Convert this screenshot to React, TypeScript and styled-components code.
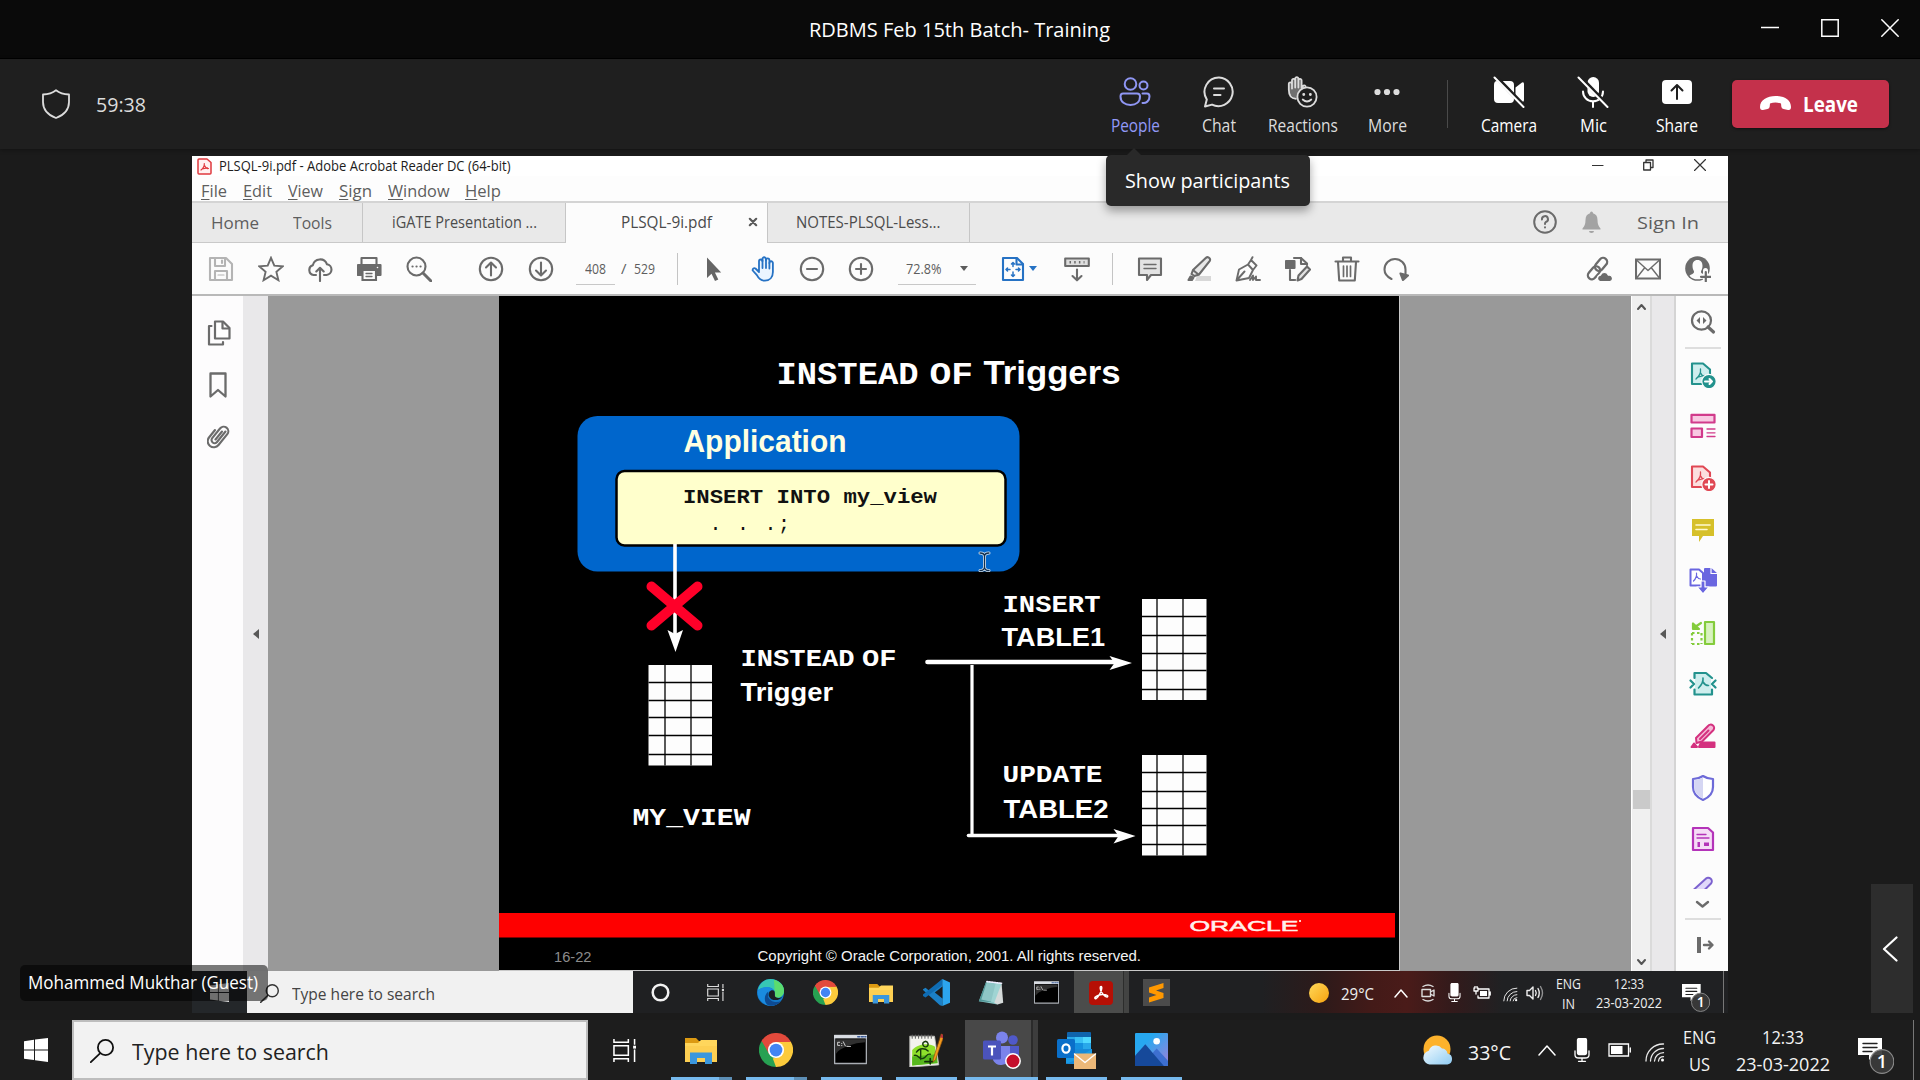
import React, { useLayoutEffect, useRef } from 'react';
import styled, { createGlobalStyle, css } from 'styled-components';

const UI = '"Open Sans", "Noto Sans", sans-serif';

const Global = createGlobalStyle`
  * { box-sizing: border-box; }
  html, body { margin: 0; background: #1b1b1b; overflow: hidden; }
  svg { display: block; flex: none; }
`;

/* ---------- text ---------- */

const TextBox = styled.span<{ $w: number; $size: number; $color?: string; $weight?: number; $lh?: number; $ml?: number }>`
  display: block;
  flex: none;
  width: ${p => p.$w}px;
  margin-left: ${p => p.$ml ?? 0}px;
  font-family: ${UI};
  font-size: ${p => p.$size}px;
  font-weight: ${p => p.$weight ?? 400};
  line-height: ${p => (p.$lh ? `${p.$lh}px` : 'normal')};
  color: ${p => p.$color ?? 'inherit'};
  white-space: nowrap;
`;

const Glyphs = styled.span`
  display: inline-block;
  transform-origin: 0 50%;
  u { text-underline-offset: 2px; text-decoration-thickness: 1px; }
`;

type TextProps = {
  w: number;
  size: number;
  color?: string;
  weight?: number;
  lh?: number;
  ml?: number;
  children: React.ReactNode;
};

/* Text that is condensed or widened to take up exactly the width it is given. */
function Text({ w, size, color, weight, lh, ml, children }: TextProps) {
  const ref = useRef<HTMLSpanElement>(null);
  useLayoutEffect(() => {
    const el = ref.current;
    if (!el) return;
    el.style.transform = 'none';
    const natural = el.getBoundingClientRect().width;
    el.style.transform = `scaleX(${w / natural})`;
  }, [w, children]);
  return (
    <TextBox $w={w} $size={size} $color={color} $weight={weight} $lh={lh} $ml={ml}>
      <Glyphs ref={ref}>{children}</Glyphs>
    </TextBox>
  );
}

/* ---------- icons ---------- */

type IconProps = { w: number; h: number; children: React.ReactNode; vb?: string; stroke?: string; sw?: number; fill?: string };

function Icon({ w, h, children, vb, stroke = 'none', sw = 2, fill = 'none' }: IconProps) {
  return (
    <svg width={w} height={h} viewBox={vb ?? `0 0 ${w} ${h}`} fill={fill} stroke={stroke} strokeWidth={sw} strokeLinecap="round" strokeLinejoin="round">
      {children}
    </svg>
  );
}

const G = '#6b6b6b';
const Tool = ({ children, stroke = G, sw = 2.1 }: { children: React.ReactNode; stroke?: string; sw?: number }) => (
  <Icon w={26} h={26} stroke={stroke} sw={sw}>{children}</Icon>
);

const SaveIcon = () => (
  <Tool stroke="#b4b4b4">
    <path d="M2 2H18L24 8V24H2Z" />
    <path d="M7 2V10H17V2M14 4.5V7M7 24V15H19V24" />
    <path d="M10 19H16" strokeWidth="1.2" />
  </Tool>
);
const StarIcon = () => <Tool sw={1.9}><path d="M13 1.8 16.3 9.6 24.8 10.3 18.4 15.9 20.4 24.2 13 19.7 5.6 24.2 7.6 15.9 1.2 10.3 9.7 9.6Z" strokeLinejoin="miter" /></Tool>;
const CloudUpIcon = () => <Tool><path d="M9 19H6.5A5 5 0 0 1 5.8 9.3 7.4 7.4 0 0 1 20 8.3 5.4 5.4 0 0 1 19.5 19H17M13 25V12M9.3 15.5 13 11.8 16.7 15.5" /></Tool>;
const PrintIcon = () => (
  <Tool>
    <path d="M4.5 8V2H19.500V8" />
    <path d="M1 9H23.500V19H1Z" fill={G} />
    <path d="M5.500 14H19V24H5.500Z" fill="#fcfcfc" strokeLinejoin="miter" />
    <path d="M9 17.5H15M9 20.5H15" strokeWidth="1.3" />
    <circle cx="20.5" cy="11.5" r=".8" fill="#fff" stroke="none" />
  </Tool>
);
const FindIcon = () => (
  <Tool>
    <circle cx="10.5" cy="10.5" r="9" />
    <path d="M17 17 25 25" strokeWidth="3" />
    <path d="M6.5 10.5h.1M10.5 10.5h.1M14.5 10.5h.1" strokeWidth="2.2" />
  </Tool>
);
const CircleIcon = ({ d }: { d: string }) => <Tool><circle cx="13" cy="13" r="11.2" /><path d={d} /></Tool>;
const PointerIcon = () => <Tool stroke="none"><path d="M6 1.5V22L10.5 17.8 14 25 17.3 23.4 13.9 16.5H20.2Z" fill="#656565" /></Tool>;
const HandIcon = () => (
  <Tool stroke="#2672c4" sw={1.8}>
    <path d="M7.5 15V5.2a1.7 1.7 0 0 1 3.4 0V3a1.7 1.7 0 0 1 3.5 0v1.2a1.7 1.7 0 0 1 3.5 0V7a1.7 1.7 0 0 1 3.5 0v9c0 5-3 8.700-8 8.700-4.500 0-6.500-2.500-8-5.500L1.200 14.500C.8 12.800 2.500 11.500 4 12.500L7.500 16" transform="translate(1.500 0)" fill="#eaf4ff" />
    <path d="M12.500 12V4M16 12V4M19.400 12.500V7" />
  </Tool>
);
const FitIcon = () => (
  <Tool stroke="#2672c4">
    <path d="M3 2H17L23 8V24H3Z" />
    <path d="M16.500 2V8.500H23" />
    <path d="M13 6.500V10.500M13 16V20.500M6 13.500H10M16 13.500H20M11.500 8 13 6.500 14.500 8M11.500 19 13 20.500 14.500 19M7.500 12 6 13.500 7.500 15M18.500 12 20 13.500 18.500 15" strokeWidth="1.5" />
  </Tool>
);
const ScrollIcon = () => (
  <Tool>
    <path d="M1.200 2.500H24.800V10H1.200Z" fill="#dedede" />
    <path d="M5.500 6.300H20.500" strokeDasharray="1.500 3.200" strokeLinecap="butt" strokeWidth="2.400" />
    <path d="M13 13.500V24M8.500 20 13 24.300 17.500 20" />
  </Tool>
);
const CommentIcon = () => (
  <Tool>
    <path d="M2 2.500H24V19H14L10 24V19H2Z" fill="#e3e3e3" />
    <path d="M7 8.500H19M7 12.500H19" strokeWidth="1.400" />
  </Tool>
);
const HighlightIcon = () => (
  <Tool>
    <path d="M11 20H25V25H9Z" fill="#d8d8d8" stroke="none" />
    <path d="M7 14 19.500 2.300a2.500 2.500 0 0 1 4.300 2.500L13 18.500 8.500 20 5.500 18Z" fill="#e8e8e8" />
    <path d="M7.500 14.500 12.500 18.500M2.500 24H6L7.500 21.500 4.500 20.500Z" fill={G} />
  </Tool>
);
const PenIcon = () => (
  <Tool sw={1.9}>
    <path d="M1.500 24.500 4 13.500 13 8.500 18 14 14 22ZM1.500 24.500 9.500 15.500M13 8.500 16 4 21.500 9.500 18 14M16 4 17.500 1.200" fill="none" />
    <path d="M15 24 18 19.500V24L21 20.500V24H25" />
  </Tool>
);
const EditPdfIcon = () => (
  <Tool>
    <path d="M9 2H16L22 7.500V9M5 14V24H9" />
    <path d="M16 2V8H21" />
    <path d="M1 5H9.500V12H1Z" fill={G} />
    <path d="M12.500 24.500 13.500 19.500 22 10.500 25 13.500 16.500 23Z" fill="#e2e2e2" />
    <path d="M10 24h.1" />
  </Tool>
);
const TrashIcon = () => <Tool><path d="M1.500 5.500H24.500M9 5V1.500H17V5M4 6 5.200 24.500H20.800L22 6" fill="none" /><path d="M9.500 10V20.500M13 10V20.500M16.500 10V20.500" strokeWidth="1.700" /></Tool>;
const RedoIcon = () => <Tool><path d="M8.500 23C3.500 20.500 1.500 17 1.500 13.500A10.500 10.500 0 0 1 22.500 13.500V19" /><path d="M17.500 17.500 25 19.500 20 24Z" fill={G} /></Tool>;
const LinkIcon = () => (
  <Tool sw={2.3}>
    <g transform="rotate(-50 12 12)">
      <rect x="-1.500" y="8" width="14.500" height="8" rx="4" />
      <rect x="9.500" y="8" width="14.500" height="8" rx="4" />
    </g>
    <path d="M14 25.500a3.200 3.200 0 0 1 .4-6.300 4.300 4.300 0 0 1 8 0 3.200 3.200 0 0 1 1.600 6.300Z" fill={G} stroke="#fcfcfc" strokeWidth="1.200" />
  </Tool>
);
const MailIcon = () => <Tool><path d="M1 3.500H25V22.500H1Z" strokeLinejoin="miter" /><path d="M2 4.500 13 14.500 24 4.500M2 21.500 9.500 12M24 21.500 16.500 12" strokeWidth="1.400" /></Tool>;
const ProfileIcon = () => (
  <Tool stroke="none">
    <circle cx="12.500" cy="12.500" r="12.300" fill={G} />
    <path d="M12.500 4c3.500 0 5 2.500 5 6 0 3-1.200 4.200-1.500 5.500-.3 2 2 2.500 4.500 4.200-2 2.600-5 3.600-8 3.600s-6-1-8-3.600c2.500-1.700 4.800-2.200 4.500-4.200-.3-1.300-1.500-2.500-1.500-5.500 0-3.500 1.500-6 5-6Z" fill="#fcfcfc" />
    <path d="M20.500 14.500V26M14.800 20.300H26" stroke="#fcfcfc" strokeWidth="5" />
    <path d="M20.800 16V25.500M16 20.800H25.800" stroke={G} strokeWidth="2.200" />
  </Tool>
);

const PagesIcon = () => <Icon w={24} h={26} stroke={G} sw={2.200}><path d="M8 1.500H16L22.500 8V18.500H8Z" fill="#fff" /><path d="M15.500 2V8.500H22M4.500 6H2V24.500H16V22" /></Icon>;
const BookmarkIcon = () => <Icon w={24} h={26} stroke={G} sw={2.300}><path d="M3.500 1.500H18.500V24.500L11 18 3.500 24.500Z" /></Icon>;
const ClipIcon = () => <Icon w={24} h={26} stroke={G} sw={2.100}><path d="M18.500 7.500 10 18a3 3 0 0 1-4.800-3.800L13 4.500a4.600 4.600 0 0 1 7.300 5.700L11.500 21a6 6 0 0 1-9.500-7.500L8 6M15 7.500 8.500 15.500" /></Icon>;

/* right rail */
const RailSearch = () => <Icon w={26} h={26} stroke={G} sw={2.200}><ellipse cx="11.500" cy="11.500" rx="9.500" ry="9.200" /><path d="M18 18 23.500 23" strokeWidth="3.200" /><path d="M10 8V15L6.500 11.500ZM13 8V15L16.500 11.500Z" fill={G} stroke="none" /></Icon>;
const PdfBadge = ({ c, f, d }: { c: string; f: string; d: string }) => (
  <Icon w={26} h={26} stroke={c} sw={2.100}>
    <path d="M2 1.500H13L20 7.500V22H2Z" fill={f} />
    <path d="M6 17C9 14.500 11 11 10.500 7M10.700 11C12 14 14 15 16 15M7 15.500 14 13.500" strokeWidth="1.300" />
    <circle cx="19" cy="19.500" r="7.200" fill={c} stroke="#fcfcfc" strokeWidth="1.200" />
    <path d={d} stroke="#fff" strokeWidth="2" />
  </Icon>
);
const Organize = () => <Icon w={26} h={26} stroke="#d13b8b" sw={2.200}><path d="M1.500 1.800H24.500V9.500H1.500ZM1.500 15.500H12V24H1.500Z" fill="#f8c9e2" /><path d="M17 16H25M17 19.800H25M17 23.500H25" strokeWidth="1.300" /></Icon>;
const RailComment = () => <Icon w={26} h={26}><path d="M2 2H24V19H13L9 25V19H2Z" fill="#d6c02a" /><path d="M6 8H20M6 12.500H17" stroke="#fff9cf" strokeWidth="1.600" /></Icon>;
const Combine = () => (
  <Icon w={28} h={28} stroke="#6a66e0" sw={2}>
    <path d="M1.500 2.500H10L14 6V18.500H1.500Z" fill="#fff" />
    <path d="M4.500 14C6.500 12 8 9 7.500 6M8 9.500C9 11.500 10 12 11.500 12" strokeWidth="1.200" />
    <path d="M16 2H22L27 6.500V18.500H16Z" fill="#6a66e0" stroke="#6a66e0" />
    <path d="M22 1V6.500H28" stroke="#fff" strokeWidth="1.200" />
    <path d="M12 14H16V20H20L14 27 8 20H12Z" fill="#6a66e0" stroke="#fff" strokeWidth="1.200" />
  </Icon>
);
const OrganizeGreen = () => <Icon w={26} h={26} stroke="#84cc3c" sw={2.200}><path d="M15 2H24V24H15Z" fill="#d8f2bf" /><path d="M2 13H11M2 24H11M2 13V24M11.500 13V24" strokeDasharray="2.500 2.500" strokeLinecap="butt" /><path d="M3 3.500V9H9ZM5 7 11 3" fill="#84cc3c" /></Icon>;
const Compress = () => <Icon w={28} h={26} stroke="#23928d" sw={2.200}><path d="M6 2.500H17L22 7V23H6Z" fill="#cfeeee" stroke="none" /><path d="M5.500 7V2H17L23 7M5.500 18.500V23.500H23V18.500M1.500 9.500 5 13 1.500 16.500M26.500 9.500 23 13 26.500 16.500" /><path d="M9.500 17C12.500 14 14.500 11 14 7M14 11C15.500 13.500 17.500 14.500 19.500 14.500" strokeWidth="1.600" /></Icon>;
const Redact = () => <Icon w={26} h={26} stroke="#d4317f" sw={2}><path d="M11 19.500H24.500V24H9Z" fill="#d4317f" /><path d="M6 15 18 3a3.200 3.200 0 0 1 5.500 4L12 18.500 6.500 20Z" fill="#f6b8d6" /><path d="M10 16 18.500 7.500M1.500 24H7L4 20.500Z" fill="#d4317f" /></Icon>;
const Protect = () => <Icon w={24} h={28} stroke="#6d6ad8" sw={2.200}><path d="M12 2C15 4 18.500 5 22 5V13C22 19 18 23.500 12 26 6 23.500 2 19 2 13V5C5.500 5 9 4 12 2Z" fill="#fff" /><path d="M12 3.500C9 5 6 6 3.200 6.200V13C3.200 18 6.500 22 12 24.500Z" fill="#d5d6f3" stroke="none" /></Icon>;
const Form = () => <Icon w={24} h={26} stroke="#b433b9" sw={2.200}><path d="M2 2H17L22 6.500V24H2Z" fill="#f5dcf6" /><path d="M6 8.500H15M6 12H18" strokeWidth="1.300" /><path d="M6.500 16H9V21H6.500ZM13 16.500H18V20H13Z" fill="#b433b9" stroke="none" /></Icon>;
const PartialPen = () => <Icon w={24} h={13} stroke="#7c62cf" sw={2}><path d="M3 13.500 14.500 3a3.500 3.500 0 0 1 5.500 4.500L14 13.500" fill="#e0d8fa" /></Icon>;
const OpenRail = () => <Icon w={24} h={22} stroke={G} sw={2.400}><path d="M8 3V19" strokeWidth="4" strokeLinecap="butt" /><path d="M13 11H21M18 7.500 21.500 11 18 14.500" /></Icon>;

/* desktop app icons, drawn on a 32 grid */
const App32 = ({ s, children }: { s: number; children: React.ReactNode }) => <Icon w={s} h={s} vb="0 0 32 32">{children}</Icon>;
const Folder = ({ s }: { s: number }) => (
  <App32 s={s}>
    <path d="M0 4H11L14 7H26V12H0Z" fill="#dc9a12" />
    <path d="M0 9H13L16 6H32V28H0Z" fill="#ffd65c" />
    <path d="M0 12H32V28H0Z" fill="#fccb4a" opacity=".55" />
    <path d="M5 30V18.500H27V30H20V24H12V30Z" fill="#3b97dd" />
  </App32>
);
const Chrome = ({ s }: { s: number }) => (
  <App32 s={s}>
    <path d="M16 16 2.140 8A16 16 0 0 1 29.860 8Z" fill="#e24a3c" />
    <path d="M16 16 29.860 8A16 16 0 0 1 16 32Z" fill="#fccb3c" />
    <path d="M16 16V32A16 16 0 0 1 2.140 8Z" fill="#27a152" />
    <path d="M16 8.500H29.600L30 9 22 20Z" fill="#fccb3c" />
    <path d="M22.800 20 16 32 13 24Z" fill="#fccb3c" />
    <path d="M9.500 20 2.500 8 12 10Z" fill="#27a152" />
    <path d="M16 8.500H29.600A16 16 0 0 0 2.500 7.500L9.400 19.500Z" fill="#e24a3c" />
    <circle cx="16" cy="16" r="7.600" fill="#fff" />
    <circle cx="16" cy="16" r="6" fill="#4285f4" />
  </App32>
);
const Cmd = ({ s }: { s: number }) => (
  <App32 s={s}>
    <rect x=".5" y="2.500" width="31" height="27" fill="#000" stroke="#a9adb3" strokeWidth="1.500" />
    <rect x="0" y="2" width="32" height="3.200" fill="#d9dde3" />
    <path d="M23 3.600H25M26.500 3.600H28.500M29.800 3.600H31" stroke="#3b5c9a" strokeWidth="1.300" />
    <path d="M2 6H30V9C20 9.500 6 14 2 20Z" fill="#303030" />
    <path d="M5.500 9H3.500V12H5.500M7.500 10V10.300M7.500 12V12.300M9 8.500 11 12.500M12.500 13H16" stroke="#dadada" strokeWidth=".9" />
  </App32>
);
const NotepadPP = () => (
  <App32 s={34}>
    <path d="M1 3 24 3 28 30 1 32Z" fill="#f3f3ee" stroke="#c2c2bd" strokeWidth=".8" />
    <path d="M3 16C8 10 20 9 24.500 13L26.500 28 3 30.500Z" fill="#8fe02c" />
    <path d="M3 22 26 20 27 28.500 3 30.500Z" fill="#57b81d" />
    <path d="M3 2V5M6 2V5M9 2V5M12 2V5M15 2V5M18 2V5M21 2V5" stroke="#666" strokeWidth="1" />
    <path d="M13 11a2.500 2.500 0 1 1 3 2 2.500 2.500 0 1 1 2-2M7 18c3-4 8-4 11-1M5 21c4-1 4 4 8 3s3-5 7-4M11 16v9" stroke="#173a0c" strokeWidth="1.300" />
    <path d="M15 27H22M20 24V29" stroke="#103008" strokeWidth="1.600" />
    <path d="M30.500 1 33 2.500 25 25 22.500 27.500 23 24Z" fill="#f39a1e" stroke="#8a4b08" strokeWidth=".6" />
    <path d="M30.500 1 33 2.500 32 5 29.500 4Z" fill="#b5313a" />
  </App32>
);
const Teams = () => (
  <Icon w={38} h={38}>
    <circle cx="30" cy="9" r="4.800" fill="#5059c9" />
    <path d="M26 15H36V24a6 6 0 0 1-10 3Z" fill="#5059c9" />
    <circle cx="19" cy="6.500" r="6" fill="#7b83eb" />
    <path d="M10 15H27V26a9 9 0 0 1-17 3Z" fill="#7b83eb" />
    <rect x="0" y="9.500" width="18" height="19" rx="1.500" fill="#4b53bc" />
    <path d="M5 14.500H13V16.500H10.100V24.500H7.900V16.500H5Z" fill="#fff" />
    <circle cx="30" cy="30" r="7.200" fill="#c50f2c" stroke="#fff" strokeWidth="1.500" />
  </Icon>
);
const Outlook = () => (
  <Icon w={40} h={38}>
    <path d="M10 2Q10 1 11 1H33Q34 1 34 2V16H10Z" fill="#0f64ad" />
    <path d="M10 6H18V12H10Z" fill="#28a8ea" /><path d="M18 6H26V12H18Z" fill="#39c0f5" /><path d="M26 6H34V12H26Z" fill="#50d9ff" />
    <path d="M10 12H18V18H10Z" fill="#0a7bd0" /><path d="M18 12H26V18H18Z" fill="#1490df" /><path d="M26 12H34V18H26Z" fill="#28a8ea" />
    <path d="M9 18H35V31Q35 33 33 33H11Q9 33 9 31Z" fill="#178ad8" />
    <path d="M9 18 22 26 35 18V22L9 33Z" fill="#1a9be6" />
    <rect x="0" y="8" width="18" height="19" rx="1.500" fill="#0a6fc9" />
    <ellipse cx="9" cy="17.500" rx="3.600" ry="4.200" stroke="#fff" strokeWidth="2.200" />
    <path d="M17 22.500H39V38H17Z" fill="#ecb878" />
    <path d="M17.500 23 28 31.500 38.500 23" stroke="#fff" strokeWidth="1.400" />
  </Icon>
);
const Photos = () => (
  <App32 s={33}>
    <defs><linearGradient id="ph" x1="0" y1="0" x2="1" y2="1"><stop offset=".3" stopColor="#27a8f0" /><stop offset="1" stopColor="#a17ed8" /></linearGradient></defs>
    <path d="M0 1Q0 0 1 0H31Q32 0 32 1V31Q32 32 31 32H1Q0 32 0 31Z" fill="url(#ph)" />
    <path d="M12 25 21 15 32 27V32H12Z" fill="#3d6fd0" />
    <path d="M0 22 10 11 28 32H0Z" fill="#16499a" />
    <circle cx="21" cy="8" r="3.200" fill="#fff" />
  </App32>
);
const Edge = () => (
  <App32 s={27}>
    <circle cx="16" cy="16" r="16" fill="#1277c8" />
    <path d="M1 13C3 4 10 0 16 0 25 0 32 6 32 14 32 20 27 23 23 22 20 21 22 18 21 15 19 9 9 8 1 13Z" fill="#37c6b4" />
    <path d="M20 1C27 3 32 8 32 14 32 20 27 23 23 22 20 21 22 18 21 15Z" fill="#5bdc6e" />
    <path d="M1 14C7 8 17 8 20 14 14 12 11 17 13 21 15 26 22 29 28 26 24 31 18 33 12 31 4 28 0 21 1 14Z" fill="#1a8be0" />
    <path d="M13 21C15 26 22 29 28 26 25 31 19 33 13 31 8 28 8 19 13 15Z" fill="#0d4a92" />
    <path d="M20.500 14C22 18 20 21 23 22 25 23 28 22.500 30 21 26 27 16 26 14 20 13 15 17 12 20.500 14Z" fill="#1c2024" />
  </App32>
);
const VSCode = () => (
  <App32 s={27}>
    <path d="M23 0 8 14.500 3 10.500 0 12 0 13 20 31 23 32Z" fill="#1b80c7" />
    <path d="M0 20 3 22 23 7V0L0 18.500Z" fill="#0f6cb3" />
    <path d="M23 0 32 4V28L23 32Z" fill="#2ca5ee" />
    <path d="M23 9V23L14 16Z" fill="#1c1e20" />
  </App32>
);
const Notepad = () => (
  <App32 s={26}>
    <path d="M10 2 29 4 24 30 1 26Z" fill="#86c4c4" />
    <path d="M10 2 22 3 16 27 1 26Z" fill="#4f9596" />
    <path d="M11 2 29 4 22 28 4 24Z" fill="#a9dcda" opacity=".7" />
    <path d="M29 4 31 28 24 30 20 28Z" fill="#d5dada" />
    <path d="M11 2 29 4" stroke="#eef" strokeWidth="2" strokeDasharray="1.500 1.500" />
  </App32>
);
const AcrobatTile = () => (
  <Icon w={24} h={24}><rect width="24" height="24" rx="4" fill="#b60f05" /><path d="M12 5.500C13.500 5.500 12.500 9.500 11.500 11.500 10 15 7 18.500 6 17.500 5 16 9 14 13 13.600 17 13.200 19.500 14.500 18.500 15.800 16.500 17 11 11 11.200 7 11.200 6 11.500 5.500 12 5.500Z" stroke="#fff" strokeWidth="1.500" /></Icon>
);
const Sublime = () => (
  <Icon w={27} h={27}><rect width="27" height="27" fill="#4b4b4b" /><path d="M6 8.500 20.500 4V9L13 11.500 20.500 14V19L6 23.500V18.500L13.500 16 6 13.500Z" fill="#ff9800" /></Icon>
);
const TaskView = ({ w, h, c = '#fff' }: { w: number; h: number; c?: string }) => (
  <Icon w={w} h={h} vb="0 0 24 24" stroke={c} sw={1.600}>
    <path d="M1 0V3.500H16V0M1 24V20.500H16V24M1 7H16V17H1Z" strokeLinecap="butt" strokeLinejoin="miter" />
    <path d="M22.500 0V6M22.500 11V24" strokeLinecap="butt" /><rect x="21" y="7" width="3" height="3" fill={c} stroke="none" />
  </Icon>
);
const WinLogo = ({ s, c = '#fff' }: { s: number; c?: string }) => (
  <Icon w={s} h={s} vb="0 0 24 24"><path d="M0 3.200 10 1.800V11.400H0ZM11 1.600 24 0V11.400H11ZM0 12.500H10V22L0 20.700ZM11 12.500H24V24L11 22.300Z" fill={c} /></Icon>
);
const Lens = ({ w, h, c }: { w: number; h: number; c: string }) => (
  <Icon w={w} h={h} vb="0 0 24 24" stroke={c} sw={1.800}><circle cx="15.500" cy="8.500" r="7.600" /><path d="M10 14.300 .8 23.200" /></Icon>
);
const Chevron = ({ w, h, d, c = '#fff', sw = 1.500 }: { w: number; h: number; d: string; c?: string; sw?: number }) => (
  <Icon w={w} h={h} stroke={c} sw={sw}><path d={d} /></Icon>
);
const TrayMic = ({ w, h }: { w: number; h: number }) => (
  <Icon w={w} h={h} vb="0 0 16 24" stroke="#fff" sw={1.300}><rect x="3.500" y=".5" width="9" height="16" rx="1.500" fill="#fff" /><path d="M1 13V17Q1 20 5 20H11Q15 20 15 17V13M8 20V23.300M4.500 23.300H11.500" /></Icon>
);
const Wifi = ({ w, h }: { w: number; h: number }) => (
  <Icon w={w} h={h} vb="0 0 20 19" stroke="#e8e8e8" sw={1.300}><path d="M1 18A17 17 0 0 1 18.500 1M5.500 18A13 13 0 0 1 18.500 5.500M9.500 18A9 9 0 0 1 18.500 9.700M13.500 18A5 5 0 0 1 18.500 13.700" /><circle cx="17.500" cy="17" r="1.500" fill="#fff" stroke="none" /></Icon>
);
const Notify = ({ w, h }: { w: number; h: number }) => (
  <Icon w={w} h={h} vb="0 0 36 36">
    <path d="M0 0H24V17H16L11 22V17H0Z" fill="#fff" />
    <path d="M5 5.500H19M5 9.500H19M5 13.500H14" stroke="#222" strokeWidth="1.400" />
    <circle cx="24" cy="23.500" r="11.800" fill="#3a3a3a" fillOpacity=".93" stroke="#8a8a8a" strokeWidth="1.200" />
    <text x="24" y="30" textAnchor="middle" fontFamily="Open Sans, sans-serif" fontWeight="600" fontSize="18" fill="#fff">1</text>
  </Icon>
);

/* ---------- meeting window ---------- */

const Screen = styled.div`
  width: 1920px; height: 1080px;
  display: flex; flex-direction: column;
  background: #1b1b1b; color: #fff; font-family: ${UI};
`;
const TitleBar = styled.header`
  height: 59px; flex: none; display: flex; align-items: center;
  padding: 0 21px 1px 809px;
  background: #0a0a0a; border-bottom: 1px solid #000;
`;
const WindowButtons = styled.div<{ $gap: number; $pad?: number; $up?: number }>`
  display: flex; align-items: center; gap: ${p => p.$gap}px; margin-left: auto;
  padding: 0 ${p => p.$pad ?? 0}px ${p => p.$up ?? 0}px 0;
`;
const MeetingBar = styled.div`
  height: 90px; flex: none; display: flex; align-items: flex-start;
  padding: 0 31px 0 42px; background: #1f1f1f;
  position: relative; z-index: 2; box-shadow: 0 1px 4px rgba(0,0,0,.35);
`;
const Timer = styled.div`
  display: flex; align-items: center; gap: 26px; height: 90px; color: #dcdcdc;
`;
const Actions = styled.div<{ $push?: boolean }>`
  display: flex; ${p => p.$push && css`margin-left: auto;`}
`;
const Action = styled.div<{ $color: string }>`
  width: 84px; padding-top: 17px; color: ${p => p.$color};
  display: flex; flex-direction: column; align-items: center; gap: 5px; position: relative;
`;
const BarDivider = styled.div`
  width: 1px; height: 48px; margin: 21px 19px 0 18px; background: #4a4a4a;
`;
const LeaveButton = styled.div`
  width: 157px; height: 48px; margin: 21px 0 0 13px; padding-left: 28px;
  display: flex; align-items: center; gap: 12px;
  background: #c4314b; border-radius: 5px; box-shadow: 0 1px 3px rgba(0,0,0,.5);
`;
const Tooltip = styled.div`
  position: absolute; left: 13px; top: 96px; width: 204px; height: 51px;
  padding: 0 0 2px 19px; display: flex; align-items: center;
  background: #292929; color: #fff; border-radius: 5px; box-shadow: 0 5px 10px rgba(0,0,0,.35);
  &::before {
    content: ''; position: absolute; left: 21px; top: -7px;
    border: 7.5px solid transparent; border-top: 0; border-bottom: 7px solid #292929;
  }
`;
const Stage = styled.main`
  flex: 1; position: relative; padding: 7px 192px 7px; background: #1b1b1b;
`;
const Speaker = styled.div`
  position: absolute; left: 20px; top: 816px; width: 248px; height: 36px; padding: 0 0 2px 8px;
  display: flex; align-items: center; border-radius: 5px; background: rgba(0,0,0,.52); color: #fff;
`;
const SidePanel = styled.div`
  position: absolute; right: 7px; top: 735px; width: 42px; height: 129px; padding: 0 5px 0 0;
  display: flex; align-items: center; justify-content: center; background: #2d2d2d;
`;

/* ---------- shared screen ---------- */

const Shared = styled.div`
  width: 1536px; height: 857px; display: flex; flex-direction: column; background: #fcfcfc; color: #5e5e5e;
`;
const DocTitle = styled.div`
  height: 20px; flex: none; display: flex; align-items: center; gap: 7px; padding-left: 5px; background: #fff;
`;
const Menu = styled.div`
  height: 25px; flex: none; display: flex; align-items: center; padding: 4px 0 0 9px; background: #fdfdfd;
`;
const Tabs = styled.div`
  height: 42px; flex: none; display: flex; border-top: 2px solid #d4d4d4; background: #e9e9e9; box-shadow: inset 0 -1px #c9c9c9;
`;
const Tab = styled.div<{ $w: number; $pad: number; $active?: boolean }>`
  width: ${p => p.$w}px; padding: 0 0 ${p => (p.$active ? 2 : 1)}px ${p => p.$pad}px; display: flex; align-items: center;
  border-right: 1px solid #c6c6c6; margin-bottom: ${p => (p.$active ? 0 : 1)}px;
  ${p => p.$active && css`background: #fcfcfc; color: #4a4a4a;`}
`;
const Account = styled.div`
  margin-left: auto; display: flex; align-items: center; padding: 0 29px 2px 0;
`;
const Toolbar = styled.div`
  height: 53px; flex: none; display: flex; align-items: center; padding: 0 17.500px 0 16px;
  background: #fcfcfc; border-bottom: 2px solid #b9b9b9;
`;
const ToolGroup = styled.div<{ $gap: number; $ml?: number; $push?: boolean }>`
  display: flex; align-items: center; gap: ${p => p.$gap}px; margin-left: ${p => (p.$push ? 'auto' : `${p.$ml ?? 0}px`)};
`;
const Field = styled.div<{ $w: number; $pad: number; $ml: number }>`
  width: ${p => p.$w}px; height: 32px; margin-left: ${p => p.$ml}px; padding-left: ${p => p.$pad}px;
  display: flex; align-items: center; border-bottom: 1.500px solid #c8c8c8;
`;
const Rule = styled.div<{ $ml: number }>`
  width: 1px; height: 32px; background: #c4c4c4; margin-left: ${p => p.$ml}px;
`;
const Caret = styled.i<{ $c: string; $ml: number }>`
  border: 4px solid transparent; border-bottom: 0; border-top: 5px solid ${p => p.$c}; margin-left: ${p => p.$ml}px;
`;
const Body = styled.div`
  flex: 1; min-height: 0; display: flex; background: #999;
`;
const LeftRail = styled.div`
  width: 51px; padding: 24px 0 0 15px; display: flex; flex-direction: column; gap: 26px; background: #fdfcfd;
`;
const Gutter = styled.div<{ $w: number; $side?: boolean }>`
  width: ${p => p.$w}px; display: flex; align-items: center; justify-content: center;
  background: #e9e8ea; ${p => p.$side && css`border-left: 2px solid #dadada; border-right: 2px solid #d4d4d4;`}
`;
const Marker = styled.i`
  border: 5.500px solid transparent; border-left: 0; border-right: 6.500px solid #585858;
`;
const Canvas = styled.div`
  flex: 1; display: flex; justify-content: center;
`;
const Slide = styled.div`
  width: 901px; background: #000; border-right: 1px solid #c9c9c9; border-bottom: 1px solid #c9c9c9;
`;
const ScrollBar = styled.div`
  width: 19px; display: flex; flex-direction: column; align-items: center; padding: 7px 0 5px; background: #f0f0f0; border-left: 1px solid #fff;
`;
const Thumb = styled.div`
  width: 17px; height: 19px; margin: 479px 0 auto; background: #cacaca;
`;
const RightRail = styled.div`
  width: 52px; display: flex; flex-direction: column; align-items: center; background: #fcfcfc; padding-left: 1px;
`;
const RailItem = styled.div<{ $h: number; $top?: boolean }>`
  height: ${p => p.$h}px; flex: none; display: flex; align-items: ${p => (p.$top ? 'flex-start' : 'center')}; justify-content: center;
`;
const RailRule = styled.div`
  width: 36px; height: 2px; flex: none; background: #dedede;
`;

/* ---------- taskbars ---------- */

const RemoteBar = styled.div`
  height: 42px; flex: none; display: flex; color: #eee;
  background: linear-gradient(90deg, #1f2022 0, #1f2022 1070px, #2d1a1a 1130px, #431a18 1180px, #4a1b19 1215px, #331a1b 1260px, #202123 1310px);
`;
const Start = styled.div<{ $w: number; $pad: number; $bg?: string }>`
  width: ${p => p.$w}px; padding-left: ${p => p.$pad}px; display: flex; align-items: center; background: ${p => p.$bg ?? 'transparent'};
`;
const RemoteSearch = styled.div`
  width: 386px; display: flex; align-items: center; gap: 13px; padding: 2px 0 0 13px; background: #f1f1f1; color: #444;
`;
const RemoteApp = styled.div<{ $active?: boolean }>`
  width: 55.100px; display: flex; align-items: center; justify-content: center; padding-top: 1px;
  ${p => p.$active && css`background: linear-gradient(90deg, #4b4c4b 49px, #2c2d2c 49px, #2c2d2c 50px, #434443 50px);`}
`;
const Tray = styled.div`
  margin-left: auto; display: flex; align-items: center;
`;
const TrayItem = styled.div<{ $ml: number; $w: number; $dy?: number }>`
  width: ${p => p.$w}px; margin-left: ${p => p.$ml}px; padding-top: ${p => p.$dy ?? 0}px;
  display: flex; flex-direction: column; align-items: center;
`;
const PeekLine = styled.div<{ $ml: number; $mr: number }>`
  width: 1.500px; align-self: stretch; margin: 0 ${p => p.$mr}px 0 ${p => p.$ml}px; background: #777;
`;
const TaskBar = styled.footer`
  height: 60px; flex: none; display: flex; background: #1d1d1d; color: #f4f4f4;
`;
const Search = styled.div`
  width: 516px; display: flex; align-items: center; gap: 18px; padding: 1px 0 0 16px;
  background: #f2f2f2; border: 2px solid #bdbdbd; color: #222;
`;
const ViewCell = styled.div`
  width: 72px; margin-right: 11px; display: flex; align-items: center; justify-content: center;
`;
const AppCell = styled.div<{ $active?: boolean; $many?: boolean; $left?: boolean }>`
  width: ${p => (p.$active ? 73 : 61)}px;
  margin: ${p => (p.$active ? '0 8px 0 -6px' : '0 14px 0 0')};
  padding: 2px ${p => (p.$left ? 2 : 0)}px 0 0;
  display: flex; align-items: center; justify-content: center;
  border-bottom: 3px solid #76b9ed;
  ${p => p.$many && css`border-image: linear-gradient(90deg, #76b9ed 47px, #5d8fb6 47px) 1; border-width: 0 0 3px;`}
  ${p => p.$active && css`background: linear-gradient(90deg, #484848 66px, #2b2b2b 66px, #2b2b2b 68px, #3d3d3d 68px);`}
`;

/* ---------- slide ---------- */

const MONO = '"Liberation Mono", "Courier New", monospace';
const SANS = '"Liberation Sans", Arial, sans-serif';

type LabelProps = { x: number; y: number; w: number; size: number; children: string; mono?: boolean; fill?: string; weight?: number };
const Label = ({ x, y, w, size, children, mono, fill = '#fff', weight = 700 }: LabelProps) => (
  <text x={x} y={y} textLength={w} lengthAdjust="spacingAndGlyphs" fontFamily={mono ? MONO : SANS} fontSize={size} fontWeight={weight} fill={fill}>
    {children}
  </text>
);
const Sheet = ({ x, y, w, h, cols, rows }: { x: number; y: number; w: number; h: number; cols: number[]; rows: number[] }) => (
  <g stroke="#000" strokeWidth="1.300">
    <rect x={x} y={y} width={w} height={h} fill="#fdfdfd" stroke="none" />
    {cols.map(c => <path key={c} d={`M${c} ${y}V${y + h}`} />)}
    {rows.map(r => <path key={r} d={`M${x} ${r}H${x + w}`} />)}
  </g>
);

function Diagram() {
  return (
    <svg width="900" height="674" viewBox="499.500 296 900 674">
      <Label mono x={777} y={383.500} w={142} size={31}>INSTEAD</Label>
      <Label mono x={930} y={383.500} w={43.500} size={31}>OF</Label>
      <Label x={984} y={383.500} w={137} size={34}>Triggers</Label>

      <rect x="578" y="416" width="442" height="155.500" rx="20" fill="#0066cc" />
      <Label x={684} y={452} w={163} size={31} fill="#ffffe2">Application</Label>
      <rect x="617" y="471" width="389" height="74.500" rx="8" fill="#ffffcc" stroke="#000" strokeWidth="2.500" />
      <Label mono x={683.500} y={502.500} w={254} size={20} fill="#111">INSERT INTO my_view</Label>
      <text x="710 737.500 765 778.500" y="530" fontFamily={MONO} fontSize="20" fontWeight="400" fill="#111">...;</text>
      <g fill="none" strokeLinecap="round">
        <path d="M980.500 553Q985 553 985 556.500 985 553 989.500 553M980.500 570.500Q985 570.500 985 567 985 570.500 989.500 570.500M985 556V568" stroke="#cfe0f0" strokeWidth="3" />
        <path d="M980.500 553Q985 553 985 556.500 985 553 989.500 553M980.500 570.500Q985 570.500 985 567 985 570.500 989.500 570.500M985 556V568" stroke="#12304f" strokeWidth="1.300" />
      </g>

      <path d="M675.500 544V638" stroke="#fff" strokeWidth="3.600" />
      <path d="M668 630 675.500 634 683.500 630 676 652Z" fill="#fff" />
      <path d="M652 586.500 698 625.500M698 586.500 652 625.500" stroke="#ff0029" strokeWidth="10" strokeLinecap="round" />

      <Sheet x={649} y={665} w={63.500} h={100.500} cols={[665.500, 691.500]} rows={[682.500, 700.500, 717.500, 735.500, 754.500]} />
      <Label mono x={741} y={666} w={114} size={23}>INSTEAD</Label>
      <Label mono x={862.500} y={666} w={34.500} size={23}>OF</Label>
      <Label x={741} y={701} w={92.500} size={25.500}>Trigger</Label>
      <Label mono x={633} y={825} w={118} size={24}>MY_VIEW</Label>

      <g stroke="#fff" strokeWidth="4" fill="none">
        <path d="M928 662H1116" strokeWidth="4.600" strokeLinecap="round" />
        <path d="M972.500 665V835" strokeWidth="3.200" />
        <path d="M969 835.500H1120" strokeWidth="3.600" strokeLinecap="round" />
      </g>
      <path d="M1110 656 1132.500 663 1110 670 1115 663Z" fill="#fff" />
      <path d="M1114 829 1136 836 1114 843.500 1119 836Z" fill="#fff" />

      <Label mono x={1003} y={611.500} w={98} size={23}>INSERT</Label>
      <Label x={1002} y={646} w={103.500} size={25.500}>TABLE1</Label>
      <Label mono x={1003} y={782} w={100} size={23}>UPDATE</Label>
      <Label x={1004} y={818} w={105} size={25.500}>TABLE2</Label>
      <Sheet x={1142.500} y={599} w={64.500} h={101} cols={[1157.500, 1183.500]} rows={[616.500, 635.500, 653.500, 670.500, 689.500]} />
      <Sheet x={1142.500} y={755} w={64.500} h={100.500} cols={[1157.500, 1183.500]} rows={[772.500, 791.500, 808.500, 825.500, 844.500]} />

      <rect x="499" y="913" width="896.500" height="24.500" fill="#fe0000" />
      <text x="1190" y="931" textLength="109" lengthAdjust="spacingAndGlyphs" fontFamily={SANS} fontSize="15.500" fill="#fff0ea" stroke="#fff0ea" strokeWidth=".500">ORACLE</text>
      <rect x="1299.500" y="920" width="2" height="2" fill="#ffd0c8" />
      <Label x={554.500} y={962} w={37.500} size={15.500} fill="#8c8c8c" weight={400}>16-22</Label>
      <Label x={758} y={961} w={383.500} size={14.800} weight={400} fill="#f4f4f4">Copyright © Oracle Corporation, 2001. All rights reserved.</Label>
    </svg>
  );
}

/* ---------- sections ---------- */

const MenuWord = ({ word, w, ml }: { word: string; w: number; ml: number }) => (
  <Text w={w} ml={ml} size={16.500} lh={20}><u>{word[0]}</u>{word.slice(1)}</Text>
);

function AcrobatWindow() {
  return (
    <>
      <DocTitle>
        <Icon w={15} h={17} stroke="#e0393e" sw={1.500}>
          <path d="M1 2Q1 1 2 1H10L14 4.500V15Q14 16 13 16H2Q1 16 1 15Z" fill="#fff1f1" />
          <path d="M4 12C6 10.500 7.500 8 7.300 5.500M7.500 7.500C8.500 10 10 10.800 11.500 10.500M5 11 10.500 9.800" strokeWidth="1.200" />
        </Icon>
        <Text w={291.500} size={14} color="#1c1c1c" lh={18}>PLSQL-9i.pdf - Adobe Acrobat Reader DC (64-bit)</Text>
        <WindowButtons $gap={39} $pad={22} $up={3}>
          <Icon w={12} h={12} stroke="#333" sw={1.200}><path d="M0 6.500H11" /></Icon>
          <Icon w={12} h={12} stroke="#333" sw={1.300}><path d="M.700 3.500H7.500V11H.700ZM3 3V1H10V8.500H8" /></Icon>
          <Icon w={12} h={12} stroke="#333" sw={1.200}><path d="M.5 .5 11.500 11.500M11.500 .5 .5 11.500" /></Icon>
        </WindowButtons>
      </DocTitle>
      <Menu>
        <MenuWord word="File" w={26} ml={0} />
        <MenuWord word="Edit" w={29} ml={16} />
        <MenuWord word="View" w={35} ml={16} />
        <MenuWord word="Sign" w={33} ml={16} />
        <MenuWord word="Window" w={61.500} ml={16} />
        <MenuWord word="Help" w={36} ml={15.500} />
      </Menu>
      <Tabs>
        <Tab $w={171} $pad={18.500}>
          <Text w={48} size={16.500}>Home</Text>
          <Text w={39} ml={34} size={16.500}>Tools</Text>
        </Tab>
        <Tab $w={203} $pad={28.500}><Text w={145} size={15.500} color="#4c4c4c">iGATE Presentation ...</Text></Tab>
        <Tab $w={202} $pad={55} $active>
          <Text w={91} size={15.500}>PLSQL-9i.pdf</Text>
          <TrayItem $ml={36} $w={10}><Icon w={10} h={10} stroke="#5a5a5a" sw={2.200}><path d="M1.800 1.800 8.200 8.200M8.200 1.800 1.800 8.200" /></Icon></TrayItem>
        </Tab>
        <Tab $w={202} $pad={28}><Text w={144.500} size={15.500} color="#4c4c4c">NOTES-PLSQL-Less...</Text></Tab>
        <Account>
          <Icon w={24} h={24} stroke={G} sw={2}><circle cx="12" cy="12" r="10.800" /><path d="M9 9.500A3 3 0 1 1 12.800 12Q12 12.500 12 14M12 17.300v.2" /></Icon>
          <TrayItem $ml={25} $w={19}><Icon w={19} h={24} fill="#a3a3a3"><path d="M9.500 1.500Q11 1.500 11 3.200 15.500 4.500 15.500 10 15.500 15.500 18.500 18.500V19.500H.5V18.500Q3.500 15.500 3.500 10 3.500 4.500 8 3.200 8 1.500 9.500 1.500ZM7 21H12Q12 23 9.500 23T7 21Z" /></Icon></TrayItem>
          <Text w={62} ml={36} size={16.500} weight={500}>Sign In</Text>
        </Account>
      </Tabs>
      <Toolbar>
        <ToolGroup $gap={23.500}><SaveIcon /><StarIcon /><CloudUpIcon /><PrintIcon /><FindIcon /></ToolGroup>
        <ToolGroup $gap={23.500} $ml={46}>
          <CircleIcon d="M13 19.500V7M8 11.500 13 6.500 18 11.500" />
          <CircleIcon d="M13 6.500V19M8 14.500 13 19.500 18 14.500" />
        </ToolGroup>
        <Field $w={39} $pad={9} $ml={22.500}><Text w={21} size={14}>408</Text></Field>
        <Text w={5.500} ml={6} size={14}>/</Text>
        <Text w={21} ml={7} size={14}>529</Text>
        <Rule $ml={22} />
        <ToolGroup $gap={23} $ml={23.500}>
          <PointerIcon /><HandIcon /><CircleIcon d="M8 13H18" /><CircleIcon d="M8 13H18M13 8V18" />
        </ToolGroup>
        <Field $w={78.500} $pad={8.500} $ml={23.500}>
          <Text w={35.500} size={14}>72.8%</Text>
          <Caret $c="#5c5c5c" $ml={18.500} />
        </Field>
        <ToolGroup $gap={0} $ml={24}><FitIcon /></ToolGroup>
        <Caret $c="#2672c4" $ml={3} />
        <ToolGroup $gap={0} $ml={26.500}><ScrollIcon /></ToolGroup>
        <Rule $ml={22.500} />
        <ToolGroup $gap={23.400} $ml={23.500}>
          <CommentIcon /><HighlightIcon /><PenIcon /><EditPdfIcon /><TrashIcon /><RedoIcon />
        </ToolGroup>
        <ToolGroup $gap={23.500} $push><LinkIcon /><MailIcon /><ProfileIcon /></ToolGroup>
      </Toolbar>
      <Body>
        <LeftRail><PagesIcon /><BookmarkIcon /><ClipIcon /></LeftRail>
        <Gutter $w={25}><Marker /></Gutter>
        <Canvas><Slide><Diagram /></Slide></Canvas>
        <ScrollBar>
          <Chevron w={9} h={8} d="M1 6 4.500 2 8 6" c="#555" sw={2} />
          <Thumb />
          <Chevron w={9} h={8} d="M1 2 4.500 6 8 2" c="#555" sw={2} />
        </ScrollBar>
        <Gutter $w={26} $side><Marker /></Gutter>
        <RightRail>
          <RailItem $h={51}><RailSearch /></RailItem>
          <RailRule />
          <RailItem $h={51.600}><PdfBadge c="#23928d" f="#cfeeee" d="M15 19.500H22M19.500 17 22 19.500 19.500 22" /></RailItem>
          <RailItem $h={51.600}><Organize /></RailItem>
          <RailItem $h={51.600}><PdfBadge c="#e04854" f="#fcdede" d="M15.500 19.500H22.500M19 16V23" /></RailItem>
          <RailItem $h={51.600}><RailComment /></RailItem>
          <RailItem $h={51.600}><Combine /></RailItem>
          <RailItem $h={51.600}><OrganizeGreen /></RailItem>
          <RailItem $h={51.600}><Compress /></RailItem>
          <RailItem $h={51.600}><Redact /></RailItem>
          <RailItem $h={51.600}><Protect /></RailItem>
          <RailItem $h={51.600}><Form /></RailItem>
          <RailItem $h={35}><PartialPen /></RailItem>
          <RailItem $h={18} $top><Chevron w={15} h={10} d="M2 2 7.500 6.500 13 2" c={G} sw={2.400} /></RailItem>
          <RailRule />
          <RailItem $h={51}><OpenRail /></RailItem>
        </RightRail>
      </Body>
    </>
  );
}

function RemoteTaskbar() {
  return (
    <RemoteBar>
      <Start $w={55} $pad={18} $bg="#24272a"><WinLogo s={19} c="#e8e8e8" /></Start>
      <RemoteSearch>
        <Lens w={19} h={19} c="#333" />
        <Text w={143} size={16.500}>Type here to search</Text>
      </RemoteSearch>
      <RemoteApp><Icon w={19} h={19} stroke="#f2f2f2" sw={2.500}><circle cx="9.500" cy="9.500" r="7.800" /></Icon></RemoteApp>
      <RemoteApp><TaskView w={19} h={17} c="#ddd" /></RemoteApp>
      <RemoteApp><Edge /></RemoteApp>
      <RemoteApp><Chrome s={25} /></RemoteApp>
      <RemoteApp><Folder s={24} /></RemoteApp>
      <RemoteApp><VSCode /></RemoteApp>
      <RemoteApp><Notepad /></RemoteApp>
      <RemoteApp><Cmd s={25} /></RemoteApp>
      <RemoteApp $active><AcrobatTile /></RemoteApp>
      <RemoteApp><Sublime /></RemoteApp>
      <Tray>
        <Icon w={22} h={22}>
          <defs><linearGradient id="sun" x1="0" y1="0" x2="1" y2="1"><stop stopColor="#ffd95a" /><stop offset="1" stopColor="#f7a20e" /></linearGradient></defs>
          <circle cx="11" cy="12" r="10" fill="url(#sun)" />
        </Icon>
        <TrayItem $ml={11} $w={34} $dy={3}><Text w={33} size={16}>29°C</Text></TrayItem>
        <TrayItem $ml={19} $w={14} $dy={2}><Chevron w={14} h={10} d="M1 9 7 2 13 9" /></TrayItem>
        <TrayItem $ml={13} $w={14} $dy={2}><Icon w={14} h={18} stroke="#ddd" sw={1.400}><path d="M1 5.500H9.500V12.500H1ZM9.500 8 13 6V12L9.500 10M2 2.500Q7 -.5 12 2.500M2 15.500Q7 18.500 12 15.500" /></Icon></TrayItem>
        <TrayItem $ml={13} $w={13} $dy={1}><TrayMic w={13} h={19} /></TrayItem>
        <TrayItem $ml={12} $w={18} $dy={2}><Icon w={18} h={14} stroke="#fff" sw={1.300}><path d="M5 5V3H16V12H5V10M17.200 6V9M1 2V5H5V2M2 0V2M4 0V2M3 5V8" /><path d="M7 5H14V10H7Z" fill="#fff" stroke="none" /></Icon></TrayItem>
        <TrayItem $ml={12} $w={15} $dy={4}><Wifi w={15} h={15} /></TrayItem>
        <TrayItem $ml={8} $w={18} $dy={2}><Icon w={18} h={16} stroke="#eee" sw={1.400}><path d="M1 5.500H3.500L7 2V14L3.500 10.500H1ZM9.500 5.500Q11 8 9.500 10.500M12 3.500Q14.500 8 12 12.500" /><path d="M14.500 1.500Q18.500 8 14.500 14.500" opacity=".55" /></Icon></TrayItem>
        <TrayItem $ml={12} $w={25} $dy={3}><Text w={25} size={14.500} lh={19.500}>ENG</Text><Text w={13} size={14.500} lh={19.500}>IN</Text></TrayItem>
        <TrayItem $ml={15} $w={66} $dy={2}><Text w={30} size={14.500} lh={19.500}>12:33</Text><Text w={66} size={14.500} lh={19.500}>23-03-2022</Text></TrayItem>
        <TrayItem $ml={20} $w={28} $dy={12}><Notify w={28} h={28} /></TrayItem>
        <PeekLine $ml={13} $mr={4} />
      </Tray>
    </RemoteBar>
  );
}

function DesktopTaskbar() {
  return (
    <TaskBar>
      <Start $w={72} $pad={24}><WinLogo s={24} /></Start>
      <Search>
        <Lens w={24} h={24} c="#111" />
        <Text w={197} size={22}>Type here to search</Text>
      </Search>
      <ViewCell><TaskView w={25} h={23} /></ViewCell>
      <AppCell $many $left><Folder s={32} /></AppCell>
      <AppCell $many $left><Chrome s={34} /></AppCell>
      <AppCell $left><Cmd s={33} /></AppCell>
      <AppCell $left><NotepadPP /></AppCell>
      <AppCell $active><Teams /></AppCell>
      <AppCell><Outlook /></AppCell>
      <AppCell><Photos /></AppCell>
      <Tray>
        <Icon w={32} h={30}>
          <defs><linearGradient id="cl" x1="0" y1="0" x2="1" y2="1"><stop stopColor="#f4fbff" /><stop offset="1" stopColor="#8fccf3" /></linearGradient></defs>
          <circle cx="15" cy="14" r="13.500" fill="#fdb22c" />
          <path d="M7.500 29.500a7 7 0 0 1-.7-13.800A7.500 7.500 0 0 1 20 13.500 5.500 5.500 0 0 1 25.500 18.500 5.600 5.600 0 0 1 25.500 29.500Z" fill="url(#cl)" />
        </Icon>
        <TrayItem $ml={14} $w={43} $dy={3}><Text w={43} size={20.500}>33°C</Text></TrayItem>
        <TrayItem $ml={27} $w={18}><Chevron w={18} h={12} d="M1 11 9 2 17 11" /></TrayItem>
        <TrayItem $ml={19} $w={15}><TrayMic w={16} h={24} /></TrayItem>
        <TrayItem $ml={18} $w={23}><Icon w={23} h={14} stroke="#fff" sw={1.300}><path d="M1 1H20.500V13H1ZM22.300 5V9" strokeLinejoin="miter" /><path d="M3 3H14.500V11H3Z" fill="#fff" stroke="none" /></Icon></TrayItem>
        <TrayItem $ml={15} $w={19} $dy={4}><Wifi w={20} h={19} /></TrayItem>
        <TrayItem $ml={18} $w={34} $dy={1}><Text w={33} size={18} lh={27}>ENG</Text><Text w={21} size={18} lh={27}>US</Text></TrayItem>
        <TrayItem $ml={19} $w={94} $dy={1}><Text w={42} size={18} lh={27}>12:33</Text><Text w={94} size={18} lh={27}>23-03-2022</Text></TrayItem>
        <TrayItem $ml={28} $w={36} $dy={12}><Notify w={36} h={36} /></TrayItem>
        <PeekLine $ml={19} $mr={6} />
      </Tray>
    </TaskBar>
  );
}

const LIGHT = '#dcdcdc';

export default function App() {
  return (
    <Screen>
      <Global />
      <TitleBar>
        <Text w={301} size={20.500}>RDBMS Feb 15th Batch- Training</Text>
        <WindowButtons $gap={42} $up={2}>
          <Icon w={18} h={18} stroke="#fff" sw={1.600}><path d="M0 8.500H18" /></Icon>
          <Icon w={18} h={18} stroke="#fff" sw={1.500}><path d="M.8 .8H17.200V17.200H.8Z" strokeLinejoin="miter" /></Icon>
          <Icon w={18} h={18} stroke="#fff" sw={1.500}><path d="M.8 .8 17.200 17.200M17.200 .8 .8 17.200" /></Icon>
        </WindowButtons>
      </TitleBar>

      <MeetingBar>
        <Timer>
          <Icon w={28} h={30} stroke={LIGHT} sw={1.800}><path d="M14 1.200C17.500 4 21.500 5.300 27 5.500V13C27 20.500 22 26 14 29 6 26 1 20.500 1 13V5.500C6.500 5.300 10.500 4 14 1.200Z" /></Icon>
          <Text w={50} size={20.500}>59:38</Text>
        </Timer>
        <Actions $push>
          <Action $color="#9299f7">
            <Icon w={32} h={32} stroke="#8f96f3" sw={2}>
              <circle cx="11.500" cy="8" r="5.800" /><circle cx="24.500" cy="9.500" r="4" />
              <path d="M4 17.500H18Q21 17.500 21 20.500C21 26 17 29 11.500 29S1.500 26 1.500 20.500Q1.500 17.500 4 17.500ZM23.500 17.500H28Q30.500 17.500 30.500 20.500C30.500 25 27 27.500 23.500 27" />
            </Icon>
            <Text w={49} size={17.500} lh={24}>People</Text>
            <Tooltip><Text w={165} size={20.500}>Show participants</Text></Tooltip>
          </Action>
          <Action $color={LIGHT}>
            <Icon w={32} h={32} stroke={LIGHT} sw={2}>
              <path d="M16 1.500A14.300 14.300 0 1 1 9 28.600L2 30.500 3.800 23.500A14.300 14.300 0 0 1 16 1.500ZM11 12.500H21M11 19H17.500" />
            </Icon>
            <Text w={34} size={17.500} lh={24}>Chat</Text>
          </Action>
          <Action $color={LIGHT}>
            <Icon w={32} h={32} stroke={LIGHT} sw={1.800}>
              <path d="M2 8.500 5 5 8 2.500 11 2 14 4V11L17 9 17.500 12 12 22 8 22.500 3.500 19 2 14Z" fill="#6f6f6f" stroke="none" />
              <path d="M1.800 14V8a1.600 1.600 0 0 1 3.200 0V4.500a1.600 1.600 0 0 1 3.200 0V2.800a1.600 1.600 0 0 1 3.200 0V4.500a1.600 1.600 0 0 1 3.200 0V12l1.200-1.800c1.300-1.700 3.300-.5 2.700 1.300M1.800 13.500c0 5.500 2.500 9 7.200 9.300M5 8V12.500M8.200 4.500V11.500M11.400 4.500V11.500" />
              <circle cx="20" cy="21" r="9.600" fill="#1f1f1f" />
              <path d="M16.700 18.500h.1M23.300 18.500h.1" strokeWidth="2.800" /><path d="M15.700 23.500Q20 27.500 24.300 23.500" />
            </Icon>
            <Text w={70} size={17.500} lh={24}>Reactions</Text>
          </Action>
          <Action $color={LIGHT}>
            <Icon w={32} h={32} fill={LIGHT}><circle cx="6.500" cy="16" r="3.100" /><circle cx="16" cy="16" r="3.100" /><circle cx="25.500" cy="16" r="3.100" /></Icon>
            <Text w={39} size={17.500} lh={24}>More</Text>
          </Action>
        </Actions>
        <BarDivider />
        <Actions>
          <Action $color="#fff">
            <Icon w={32} h={32}>
              <path d="M4 5H17Q21 5 21 9V23Q21 27 17 27H5Q1 27 1 23V9Q1 5 4 5ZM22.500 11.500 29 6.500Q31 5.500 31 8V24Q31 26.500 29 25.500L22.500 20.500Z" fill="#fff" />
              <path d="M3.500 1.500 32 31" stroke="#1f1f1f" strokeWidth="4" /><path d="M1.500 1.500 30.500 31" stroke="#fff" strokeWidth="2" />
            </Icon>
            <Text w={56} size={17.500} lh={24}>Camera</Text>
          </Action>
          <Action $color="#fff">
            <Icon w={32} h={32}>
              <rect x="10.500" y="1" width="11.500" height="20" rx="5.700" fill="#fff" />
              <path d="M6 15.500A10 9.800 0 0 0 26 15.500M16 25.500V31" stroke="#fff" strokeWidth="2" />
              <path d="M3.500 1.500 32 31" stroke="#1f1f1f" strokeWidth="4" /><path d="M1.500 1.500 30.500 31" stroke="#fff" strokeWidth="2" />
            </Icon>
            <Text w={27} size={17.500} lh={24}>Mic</Text>
          </Action>
          <Action $color="#fff">
            <Icon w={32} h={32}>
              <rect x="1" y="4" width="30" height="24" rx="4" fill="#fff" />
              <path d="M16 23V10M10.500 14.500 16 9 21.500 14.500" stroke="#1f1f1f" strokeWidth="2" />
            </Icon>
            <Text w={42} size={17.500} lh={24}>Share</Text>
          </Action>
        </Actions>
        <LeaveButton>
          <Icon w={31} h={16}><path d="M15.500 0C24 0 31 4 31 11Q31 14.500 28 14L23.500 13Q21.500 12.500 21.300 10.500L21 7.500Q15.500 5.500 10 7.500L9.700 10.500Q9.500 12.500 7.500 13L3 14Q0 14.500 0 11C0 4 7 0 15.500 0Z" fill="#fff" /></Icon>
          <Text w={55} size={20.500} weight={700}>Leave</Text>
        </LeaveButton>
      </MeetingBar>

      <Stage>
        <Shared>
          <AcrobatWindow />
          <RemoteTaskbar />
        </Shared>
        <Speaker><Text w={230} size={17.500}>Mohammed Mukthar (Guest)</Text></Speaker>
        <SidePanel><Chevron w={16} h={26} d="M14.500 1.500 2 13 14.500 24.500" sw={2.200} /></SidePanel>
      </Stage>

      <DesktopTaskbar />
    </Screen>
  );
}
